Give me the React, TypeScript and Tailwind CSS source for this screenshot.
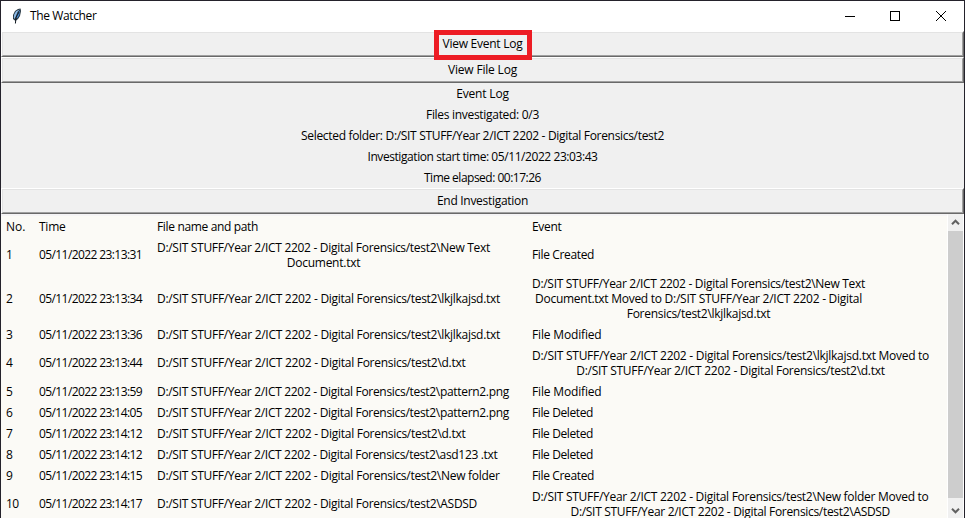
import { useLayoutEffect, useRef, useState } from "react";

type LineProps = { text: string; width: number; className?: string };

// One line of text, tracked so that it fills the given width.
function Line({ text, width, className = "" }: LineProps) {
  const ref = useRef<HTMLSpanElement>(null);
  const [spacing, setSpacing] = useState(0);
  useLayoutEffect(() => {
    if (!ref.current) return;
    ref.current.style.letterSpacing = "0px";
    const natural = ref.current.getBoundingClientRect().width;
    const next = (width - natural) / text.length;
    ref.current.style.letterSpacing = `${next}px`;
    setSpacing(next);
  }, [text, width]);
  return (
    <span ref={ref} className={`block w-max whitespace-pre ${className}`} style={{ letterSpacing: `${spacing}px` }}>
      {text}
    </span>
  );
}

function WideButton({ text, width, marked = false }: { text: string; width: number; marked?: boolean }) {
  return (
    <button className="relative block h-[26px] w-full shrink-0 border border-t-white border-r-[#696969] border-b-[#696969] border-l-white bg-[#f0f0f0]">
      <span className="flex h-full items-center justify-center border border-t-[#e3e3e3] border-r-[#a0a0a0] border-b-[#a0a0a0] border-l-[#e3e3e3] pb-px">
        <Line text={text} width={width} />
      </span>
      {marked && <span className="absolute -top-[2px] left-[432px] z-10 h-[30px] w-[98px] border-[5px] border-[#ed1c24]" />}
    </button>
  );
}

type Cell = [string, number][];
const base = "D:/SIT STUFF/Year 2/ICT 2202 - Digital Forensics/test2\\";
const created: Cell = [["File Created", 62]];
const modified: Cell = [["File Modified", 69.5]];
const deleted: Cell = [["File Deleted", 61]];

const rows: { time: string; path: Cell; event: Cell }[] = [
  { time: "23:13:31", path: [[base + "New Text", 333], ["Document.txt", 73.5]], event: created },
  {
    time: "23:13:34",
    path: [[base + "lkjlkajsd.txt", 343]],
    event: [
      [base + "New Text", 333],
      ["Document.txt Moved to D:/SIT STUFF/Year 2/ICT 2202 - Digital", 327],
      ["Forensics/test2\\lkjlkajsd.txt", 143.5],
    ],
  },
  { time: "23:13:36", path: [[base + "lkjlkajsd.txt", 343]], event: modified },
  { time: "23:13:44", path: [[base + "d.txt", 308.5]], event: [[base + "lkjlkajsd.txt Moved to", 397], [base + "d.txt", 308.5]] },
  { time: "23:13:59", path: [[base + "pattern2.png", 352]], event: modified },
  { time: "23:14:05", path: [[base + "pattern2.png", 352]], event: deleted },
  { time: "23:14:12", path: [[base + "d.txt", 308.5]], event: deleted },
  { time: "23:14:12", path: [[base + "asd123 .txt", 340.5]], event: deleted },
  { time: "23:14:15", path: [[base + "New folder", 342.5]], event: created },
  { time: "23:14:17", path: [[base + "ASDSD", 320]], event: [[base + "New folder Moved to", 396.5], [base + "ASDSD", 319.5]] },
];

const grid = "grid grid-cols-[33px_118px_375px_1fr] items-center py-[3px]";

// Single lines beside a two-line cell sit on the upper of the two middle pixels.
function Lines({ lines, lift }: { lines: Cell; lift: boolean }) {
  return (
    <div className={`flex w-max flex-col items-center ${lift && lines.length === 1 ? "pb-px" : ""}`}>
      {lines.map(([t, w], i) => (
        <Line key={i} text={t} width={w} />
      ))}
    </div>
  );
}

function Feather() {
  return (
    <svg width="10" height="17" viewBox="0 0 10 17" className="mt-px shrink-0">
      <path d="M8.5 .5 9 3 8 8 6 11 3.5 13 1 11 1 7 3 3 6 1Z" fill="#26343f" />
      <path d="M8 1.2 5.5 4 3.5 9 3 11.2 1.8 9.5 2.2 6.5 4 3.3Z" fill="#8dbbe8" />
      <path d="M8.2 2.5 7.2 7.2 5 10.8 4.2 9 6.2 4.5Z" fill="#4384cc" />
      <path d="M7 4 4 9.5 3.4 15.5" fill="none" stroke="#101820" strokeWidth="1" />
    </svg>
  );
}

function Chevron({ down = false }: { down?: boolean }) {
  return (
    <svg width="9" height="7" viewBox="0 0 9 7" className={down ? "rotate-180" : ""}>
      <path d="M1 5.2 4.5 1.7 8 5.2" fill="none" stroke="#606060" strokeWidth="2" />
    </svg>
  );
}

export default function App() {
  return (
    <div className="flex h-[518px] w-[965px] flex-col overflow-hidden border-t border-r border-l border-[#24222b] bg-[#f0f0f0] font-['Open_Sans','Noto_Sans',sans-serif] text-[12px] leading-[15px] text-black">
      <header className="flex h-[30px] shrink-0 items-center bg-white pb-px pl-[11px]">
        <Feather />
        <div className="ml-2">
          <Line text="The Watcher" width={66.5} />
        </div>
        <svg width="101" height="12" viewBox="0 0 101 12" className="mt-px mr-[18px] ml-auto" fill="none" stroke="#000" shapeRendering="crispEdges">
          <path d="M0 6.5h10M45.5 1.5h9v9h-9z" />
          <path d="M91 1l10 10M101 1 91 11" shapeRendering="auto" />
        </svg>
      </header>
      <WideButton text="View Event Log" width={80} marked />
      <WideButton text="View File Log" width={69} />
      <section className="flex h-[105px] shrink-0 flex-col items-center leading-[21px]">
        <Line text="Event Log" width={52.5} />
        <Line text="Files investigated: 0/3" width={113} />
        <Line text="Selected folder: D:/SIT STUFF/Year 2/ICT 2202 - Digital Forensics/test2" width={363} />
        <Line text="Investigation start time: 05/11/2022 23:03:43" width={230} />
        <Line text="Time elapsed: 00:17:26" width={117} />
      </section>
      <WideButton text="End Investigation" width={91} />
      <main className="flex min-h-0 flex-1">
        <div className="min-w-0 flex-1 overflow-hidden border-t-2 border-r border-t-[#f5f4f5] border-r-white bg-[#fbfaf6] pl-[5px]">
          <div className={grid}>
            <Line text="No." width={19.5} />
            <Line text="Time" width={26.5} />
            <Line text="File name and path" width={101} />
            <Line text="Event" width={29.5} />
          </div>
          {rows.map((r, i) => {
            const lift = Math.max(r.path.length, r.event.length) === 2;
            return (
              <div key={i} className={grid}>
                <Lines lines={[[String(i + 1), i === 9 ? 12.5 : 6.5]]} lift={lift} />
                <Lines lines={[["05/11/2022 " + r.time, 103]]} lift={lift} />
                <Lines lines={r.path} lift={lift} />
                <Lines lines={r.event} lift={lift} />
              </div>
            );
          })}
        </div>
        <aside className="flex w-[16px] shrink-0 flex-col border-r border-white bg-[#f0f0f0]">
          <div className="flex h-[17px] items-center justify-center">
            <Chevron />
          </div>
          <div className="h-[267px] bg-[#cdcdcd]" />
          <div className="flex flex-1 items-center justify-center pt-[5px]">
            <Chevron down />
          </div>
        </aside>
      </main>
    </div>
  );
}
